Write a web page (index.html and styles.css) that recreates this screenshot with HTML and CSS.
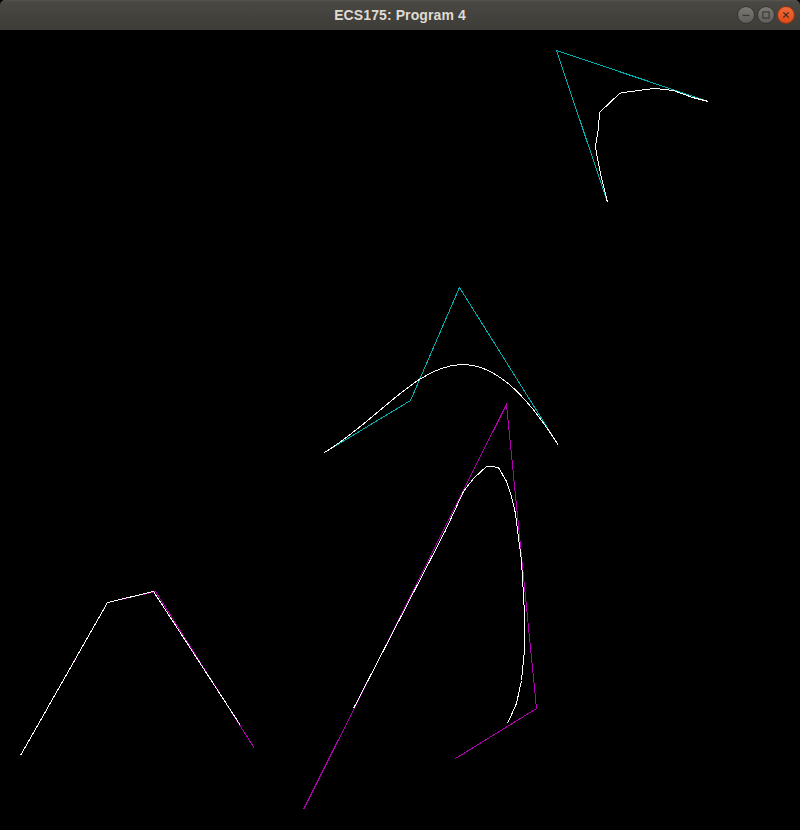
FILE: index.html
```html
<!DOCTYPE html>
<html>
<head>
<meta charset="utf-8">
<title>ECS175: Program 4</title>
<link rel="stylesheet" href="styles.css">
</head>
<body>
<div class="window">
  <header class="titlebar">
    <span class="title">ECS175: Program 4</span>
    <div class="controls">
      <span class="btn btn-min"><svg width="18" height="18" viewBox="0 0 18 18"><line x1="5" y1="9.5" x2="13" y2="9.5" stroke="#3a3935" stroke-width="1.4"/></svg></span>
      <span class="btn btn-max"><svg width="18" height="18" viewBox="0 0 18 18"><rect x="5.5" y="5.5" width="7" height="7" fill="none" stroke="#3a3935" stroke-width="1.3"/></svg></span>
      <span class="btn btn-close"><svg width="18" height="18" viewBox="0 0 18 18"><path d="M6 6 L12 12 M12 6 L6 12" stroke="#3a2a20" stroke-width="1.4"/></svg></span>
    </div>
  </header>
  <svg class="canvas" width="800" height="800" viewBox="0 30 800 800" shape-rendering="crispEdges">
    <g fill="none" stroke-width="1">
      <polyline class="cyan" points="708.5,101.5 556.5,50.5 607.5,202.5"/>
      <polyline class="white" points="708.5,101.5 692.5,97.5 673.5,90.5 655.5,88.5 645.5,89.5 631.5,91.5 622.5,92.5 619.5,93.5 599.5,112.5 598.5,127.5 595.5,146.5 596.5,153.5 600.5,173.5 607.5,202.5"/>

      <polyline class="cyan" points="324.5,452.5 410.5,400.5 459.5,287.5 558.5,445.5"/>
      <path class="white" d="M324.5,452.5 C410.5,400.5 459.5,287.5 558.5,445.5"/>

      <polyline class="magenta" points="303.5,809.5 506.5,404.5 536.5,708.5 455.5,758.5"/>
      <polyline class="white" points="353.5,708.5 445.5,530.5 463.5,491.5 473.5,478.5 486.5,466.5 491.5,466.5 498.5,467.5 506.5,481.5 511.5,496.5 515.5,513.5 517.5,530.5 521.5,560.5 524.5,613.5 524.5,650.5 521.5,680.5 516.5,703.5 507.5,723.5"/>

      <polyline class="magenta" points="20.5,755.5 107.5,602.5 155.5,591.5 254.5,748.5"/>
      <polyline class="white" points="20.5,755.5 107.5,602.5 153.5,591.5 240.5,725.5"/>
    </g>
  </svg>
</div>
</body>
</html>
```
FILE: styles.css
```css
html, body {
  margin: 0;
  padding: 0;
  background: #000;
}
.window {
  width: 800px;
  height: 830px;
  display: flex;
  flex-direction: column;
  background: #000;
}
.titlebar {
  position: relative;
  height: 30px;
  flex: 0 0 30px;
  display: flex;
  align-items: center;
  justify-content: center;
  background: linear-gradient(#57544e 0px, #4a4843 2px, #3d3c38 30px);
  border-radius: 5px 5px 0 0;
}
.title {
  font-family: "Liberation Sans", Arial, sans-serif;
  font-weight: bold;
  font-size: 14px;
  color: #dfdbd2;
  letter-spacing: 0.1px;
}
.controls {
  position: absolute;
  right: 5px;
  top: 6px;
  display: flex;
  gap: 2px;
}
.btn {
  width: 18px;
  height: 18px;
  border-radius: 50%;
  display: flex;
  align-items: center;
  justify-content: center;
  box-sizing: border-box;
}
.btn svg {
  display: block;
}
.btn-min, .btn-max {
  background: linear-gradient(#7a7974, #5f5e5a);
  border: 1px solid #34332f;
}
.btn-close {
  background: linear-gradient(#f06a3c, #df4b16);
  border: 1px solid #8e3412;
}
.canvas {
  display: block;
  background: #000;
}
.cyan { stroke: #00b0b0; }
.magenta { stroke: #b000b0; }
.white { stroke: #ffffff; }
```
